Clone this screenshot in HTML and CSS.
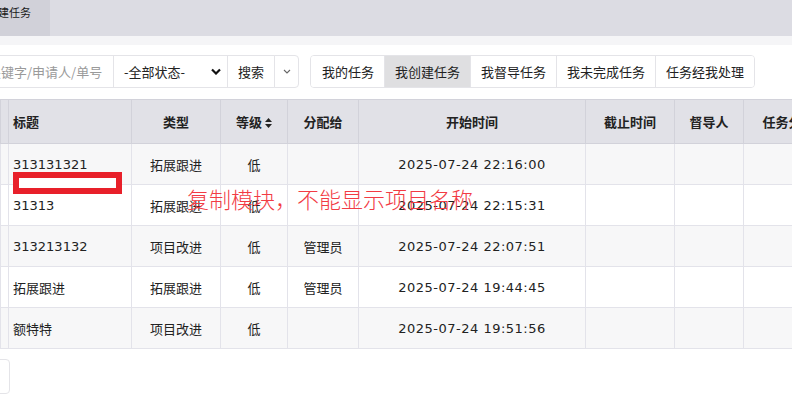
FILE: index.html
```html
<!DOCTYPE html>
<html>
<head>
  <title>我创建任务</title>
  <link rel="stylesheet" href="styles.css">
</head>
<body>
  <div class="topbar">
    <div class="tab-item">创建任务</div>
  </div>
  <div class="strip"></div>

  <div class="content">
    <div class="toolbar">
      <div class="search-group">
        <input class="search-input" type="text" placeholder="关键字/申请人/单号">
        <div class="status-select">
          <span>-全部状态-</span>
          <svg width="10" height="7" viewBox="0 0 10 7"><polyline points="1,1.5 5,5.5 9,1.5" fill="none" stroke="#111" stroke-width="2.2"/></svg>
        </div>
        <button class="btn btn-search">搜索</button>
        <button class="btn btn-caret">
          <svg width="8" height="5" viewBox="0 0 8 5"><polyline points="1,1 4,4 7,1" fill="none" stroke="#666" stroke-width="1.1"/></svg>
        </button>
      </div>
      <div class="task-tabs">
        <button class="task-tab">我的任务</button>
        <button class="task-tab active">我创建任务</button>
        <button class="task-tab">我督导任务</button>
        <button class="task-tab">我未完成任务</button>
        <button class="task-tab">任务经我处理</button>
      </div>
    </div>

    <div class="table-wrap">
      <table class="task-table">
        <colgroup>
          <col style="width:8px">
          <col style="width:123px">
          <col style="width:89px">
          <col style="width:67px">
          <col style="width:71px">
          <col style="width:227px">
          <col style="width:89px">
          <col style="width:69px">
          <col style="width:90px">
        </colgroup>
        <thead>
          <tr>
            <th></th>
            <th class="align-left">标题</th>
            <th>类型</th>
            <th>等级 <svg class="sort-icon" width="7" height="10" viewBox="0 0 7 10"><polygon points="3.5,0 7,4 0,4" fill="#222"/><polygon points="0,6 7,6 3.5,10" fill="#222"/></svg></th>
            <th>分配给</th>
            <th>开始时间</th>
            <th>截止时间</th>
            <th>督导人</th>
            <th>任务分类</th>
          </tr>
        </thead>
        <tbody>
          <tr>
            <td></td>
            <td class="align-left">313131321</td>
            <td>拓展跟进</td>
            <td>低</td>
            <td></td>
            <td class="date">2025-07-24 22:16:00</td>
            <td></td><td></td><td></td>
          </tr>
          <tr>
            <td></td>
            <td class="align-left">31313</td>
            <td>拓展跟进</td>
            <td>低</td>
            <td></td>
            <td class="date">2025-07-24 22:15:31</td>
            <td></td><td></td><td></td>
          </tr>
          <tr>
            <td></td>
            <td class="align-left">313213132</td>
            <td>项目改进</td>
            <td>低</td>
            <td>管理员</td>
            <td class="date">2025-07-24 22:07:51</td>
            <td></td><td></td><td></td>
          </tr>
          <tr>
            <td></td>
            <td class="align-left">拓展跟进</td>
            <td>拓展跟进</td>
            <td>低</td>
            <td>管理员</td>
            <td class="date">2025-07-24 19:44:45</td>
            <td></td><td></td><td></td>
          </tr>
          <tr>
            <td></td>
            <td class="align-left">额特特</td>
            <td>项目改进</td>
            <td>低</td>
            <td></td>
            <td class="date">2025-07-24 19:51:56</td>
            <td></td><td></td><td></td>
          </tr>
        </tbody>
      </table>
    </div>

    <div class="pager"></div>
  </div>

  <!-- annotation drawn over the screenshot -->
  <div class="mark-box"></div>
  <div class="mark-text">复制模块，不能显示项目名称</div>
</body>
</html>
```

FILE: styles.css
```css
body {
  margin: 0;
  font-family: "DejaVu Sans", "Noto Sans CJK SC", sans-serif;
  font-size: 13px;
  color: #222;
  background-color: #fff;
  overflow: hidden;
  position: relative;
}

.topbar {
  height: 36px;
  background-color: #dcdce3;
  display: flex;
}

.tab-item {
  margin-left: -25px;
  padding: 4px 19px 0 12px;
  background-color: #d1d1d9;
  font-family: "Noto Sans CJK SC", sans-serif;
  font-size: 11px;
  line-height: 16px;
  color: #1a1a1a;
}

.strip {
  height: 9px;
  background-color: #f5f5f7;
}

.content {
  padding-top: 10px;
}

.toolbar {
  display: flex;
  gap: 12px;
  height: 33px;
}

.search-group {
  display: flex;
}

.search-group > * {
  box-sizing: border-box;
  height: 33px;
  border: 1px solid #e4e4e8;
  background-color: #fff;
  font-family: "Noto Sans CJK SC", sans-serif;
  font-size: 13px;
  color: #222;
}

.search-input {
  width: 138px;
  margin-left: -24px;
  padding: 0 0 0 11px;
  outline: none;
}

.search-input::placeholder {
  color: #9a9a9a;
}

.status-select {
  width: 115px;
  margin-left: -1px;
  padding: 0 6px 0 10px;
  display: flex;
  align-items: center;
  justify-content: space-between;
}

.btn {
  padding: 0;
  margin-left: -1px;
  cursor: pointer;
}

.btn-search {
  width: 48px;
}

.btn-caret {
  width: 25px;
  border-radius: 0 4px 4px 0;
  display: flex;
  align-items: center;
  justify-content: center;
}

.task-tabs {
  display: flex;
  height: 33px;
  margin-left: -1px;
  border: 1px solid #e4e4e8;
  border-radius: 4px;
  overflow: hidden;
  box-sizing: border-box;
}

.task-tab {
  border: none;
  border-left: 1px solid #e4e4e8;
  background-color: #fff;
  padding: 0 10px;
  font-family: "Noto Sans CJK SC", sans-serif;
  font-size: 13px;
  color: #222;
  cursor: pointer;
}

.task-tab:first-child {
  border-left: none;
  padding-left: 11px;
}

.task-tab.active {
  background-color: #dfdfe1;
}

.table-wrap {
  margin-top: 11px;
  overflow: hidden;
}

.task-table {
  border-collapse: collapse;
  table-layout: fixed;
  width: 833px;
}

.task-table th,
.task-table td {
  border: 1px solid #e3e3ea;
  text-align: center;
  padding: 0 5px;
  white-space: nowrap;
  overflow: hidden;
}

.task-table th {
  height: 43px;
  background-color: #e1e1e7;
  border-color: #d2d2da;
  font-family: "Noto Sans CJK SC", sans-serif;
  font-weight: bold;
  font-size: 13px;
}

.task-table td {
  height: 40px;
}

.task-table tbody tr:nth-child(odd) {
  background-color: #f7f7f8;
}

.task-table th.align-left,
.task-table td.align-left {
  text-align: left;
  padding-left: 4px;
}

.task-table td.date {
  letter-spacing: 0.5px;
}

.sort-icon {
  vertical-align: -1px;
}

.pager {
  margin-top: 10px;
  margin-left: -32px;
  width: 40px;
  height: 33px;
  border: 1px solid #e4e4e8;
  border-radius: 4px;
}

.mark-box {
  position: absolute;
  left: 13px;
  top: 172px;
  width: 109px;
  height: 22px;
  box-sizing: border-box;
  border: 6px solid #e8202a;
  background-color: #fff;
}

.mark-text {
  position: absolute;
  left: 187px;
  top: 184px;
  font-family: "Noto Sans CJK SC", sans-serif;
  font-weight: 300;
  font-size: 22px;
  line-height: 28px;
  color: #f23b44;
  white-space: nowrap;
}
```
